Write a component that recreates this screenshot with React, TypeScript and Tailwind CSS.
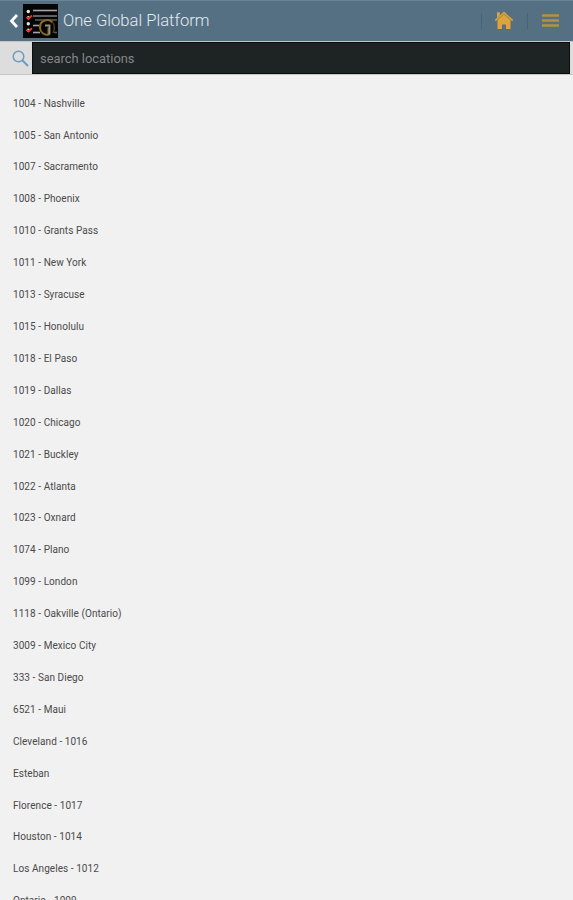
import { useState } from 'react';

const locations: string[] = [
  '1004 - Nashville',
  '1005 - San Antonio',
  '1007 - Sacramento',
  '1008 - Phoenix',
  '1010 - Grants Pass',
  '1011 - New York',
  '1013 - Syracuse',
  '1015 - Honolulu',
  '1018 - El Paso',
  '1019 - Dallas',
  '1020 - Chicago',
  '1021 - Buckley',
  '1022 - Atlanta',
  '1023 - Oxnard',
  '1074 - Plano',
  '1099 - London',
  '1118 - Oakville (Ontario)',
  '3009 - Mexico City',
  '333 - San Diego',
  '6521 - Maui',
  'Cleveland - 1016',
  'Esteban',
  'Florence - 1017',
  'Houston - 1014',
  'Los Angeles - 1012',
  'Ontario - 1009',
];

function AppLogo() {
  return (
    <svg className="w-[35px] h-[34px] shrink-0" viewBox="0 0 35 34">
      <rect width="35" height="34" fill="#050505" />
      {/* Checklist lines */}
      <g stroke="#a3a6a8" strokeWidth="1.6">
        <path d="M10 6.5h24" />
        <path d="M10 12h24" stroke="#77797b" />
        <path d="M12 16h22" stroke="#55585a" />
        <path d="M10 21.5h6" />
        <path d="M10 28.5h7" />
        <path d="M31 28.5h3" stroke="#55585a" />
      </g>
      {/* Bullets */}
      <g fill="#e4e6e8">
        <circle cx="5.3" cy="7.5" r="1.7" />
        <circle cx="5.3" cy="13.7" r="1.7" />
        <circle cx="5.3" cy="19.8" r="1.7" />
        <circle cx="5.3" cy="26.2" r="1.7" />
      </g>
      <g fill="none" stroke="#dc3430" strokeWidth="1.9">
        <path d="M4 13l1.6 1.6L9 11.5" />
        <path d="M4 25.8l1.6 1.600L9 24.300" />
      </g>
      {/* Monogram */}
      <path d="M29.500 18.5C26 14 16.500 16 17 24c.3 4.500 4.500 7.500 8.500 6.500v-7" fill="none" stroke="#8a6a26" strokeWidth="2" />
      <path d="M22 21.500h4.500v9" fill="none" stroke="#9a917c" strokeWidth="1.8" />
      <path d="M30 18.500c1.700 3 1.700 7 0 10.500" fill="none" stroke="#4e3a14" strokeWidth="1.4" />
    </svg>
  );
}

function HomeIcon() {
  return (
    <svg className="w-[20px] h-[20px] -translate-x-px -translate-y-px" viewBox="0 0 20 20" fill="#dca43a">
      <path d="M3.500 10L10 4l6.500 6v9H12v-4.500H8V19H3.500z" />
      <path d="M1.300 10.700L10 2.700l8.700 8" fill="none" stroke="#dca43a" strokeWidth="1.600" />
      <path d="M3 2.200h2.800v3L3 7.700z" />
      <path d="M2.200 11L10 3.900l7.800 7.100" fill="none" stroke="#8b8050" strokeWidth=".5" />
    </svg>
  );
}

export default function App() {
  const [searchTerm, setSearchTerm] = useState('');

  const filteredLocations = locations.filter((location) =>
    location.toLowerCase().includes(searchTerm.toLowerCase())
  );

  return (
    <div className="h-screen flex flex-col overflow-hidden bg-[#f1f1f1] font-[Roboto,sans-serif]">
      {/* Header */}
      <header className="h-[41px] shrink-0 flex items-center bg-[#567083] border-t border-[#688496]">
        <button className="w-[23px] h-full flex items-center pl-[9px] pb-px" aria-label="Back">
          <svg className="w-[10px] h-[14px]" viewBox="0 0 10 14" fill="none" stroke="#fff" strokeWidth="2.8">
            <path d="M8 1L2.500 7l5.500 6" />
          </svg>
        </button>
        <AppLogo />
        <h1 className="ml-[5px] pt-px flex-1 text-[16.6px] leading-none text-[#e2eaf2] font-light">
          One Global Platform
        </h1>
        <button className="w-[46px] h-[16px] flex items-center justify-center border-l border-[#4b6376]" aria-label="Home">
          <HomeIcon />
        </button>
        <button className="w-[46px] h-[16px] flex items-center justify-center border-l border-[#4b6376]" aria-label="Menu">
          <svg className="w-[17px] h-[13px] -translate-y-px" viewBox="0 0 17 13" stroke="#b3933c" strokeWidth="2.400">
            <path d="M0 1.500h17M0 6.500h17M0 11.500h17" />
          </svg>
        </button>
      </header>

      {/* Search bar */}
      <div className="h-[34px] shrink-0 flex bg-[#dddddd] border-y border-[#c4c6c7]">
        <div className="w-[32px] flex items-center justify-center pl-2">
          <svg className="w-[17px] h-[17px]" viewBox="0 0 17 17" fill="none" stroke="#6c9cc2">
            <circle cx="6.500" cy="6.500" r="5.300" strokeWidth="1.500" />
            <path d="M10.500 10.500l5.500 5.500" strokeWidth="2" />
          </svg>
        </div>
        <input
          type="text"
          placeholder="search locations"
          value={searchTerm}
          onChange={(e) => setSearchTerm(e.target.value)}
          className="flex-1 min-w-0 mr-[3px] px-[7px] pt-px bg-[#1e2324] border border-[#0b0d0d] text-[12.9px] text-[#c8c8c8] placeholder:text-[#858789] outline-none"
        />
      </div>

      {/* Locations */}
      <ul className="pt-[12.2px] text-[10px] tracking-[0.06px] text-[#4a4a4a]">
        {filteredLocations.map((location) => (
          <li key={location} className="h-[31.92px] flex items-center pl-[13px]">
            {location}
          </li>
        ))}
      </ul>
    </div>
  );
}
